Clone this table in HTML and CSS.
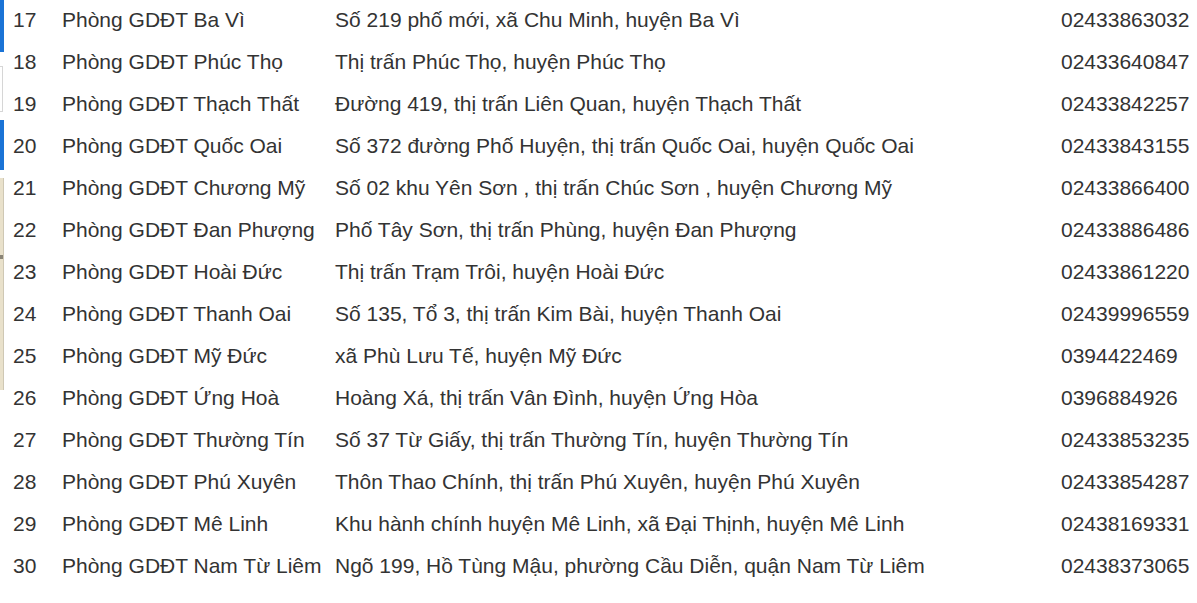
FILE: index.html
```html
<!DOCTYPE html>
<html lang="vi">
<head>
<meta charset="utf-8">
<title>Danh sách Phòng GDĐT</title>
<link rel="stylesheet" href="styles.css">
</head>
<body>
<div class="page">
  <div class="edge">
    <div class="edge-blue edge-b1"></div>
    <div class="edge-box"></div>
    <div class="edge-blue edge-b2"></div>
    <div class="edge-beige"><span class="edge-mark"></span></div>
  </div>
  <table class="list">
    <colgroup>
      <col class="c-no"><col class="c-name"><col class="c-addr"><col class="c-phone">
    </colgroup>
    <tbody>
      <tr><td>17</td><td>Phòng GDĐT Ba Vì</td><td>Số 219 phố mới, xã Chu Minh, huyện Ba Vì</td><td>02433863032</td></tr>
      <tr><td>18</td><td>Phòng GDĐT Phúc Thọ</td><td>Thị trấn Phúc Thọ, huyện Phúc Thọ</td><td>02433640847</td></tr>
      <tr><td>19</td><td>Phòng GDĐT Thạch Thất</td><td>Đường 419, thị trấn Liên Quan, huyện Thạch Thất</td><td>02433842257</td></tr>
      <tr><td>20</td><td>Phòng GDĐT Quốc Oai</td><td>Số 372 đường Phố Huyện, thị trấn Quốc Oai, huyện Quốc Oai</td><td>02433843155</td></tr>
      <tr><td>21</td><td>Phòng GDĐT Chương Mỹ</td><td>Số 02 khu Yên Sơn , thị trấn Chúc Sơn , huyện Chương Mỹ</td><td>02433866400</td></tr>
      <tr><td>22</td><td>Phòng GDĐT Đan Phượng</td><td>Phố Tây Sơn, thị trấn Phùng, huyện Đan Phượng</td><td>02433886486</td></tr>
      <tr><td>23</td><td>Phòng GDĐT Hoài Đức</td><td>Thị trấn Trạm Trôi, huyện Hoài Đức</td><td>02433861220</td></tr>
      <tr><td>24</td><td>Phòng GDĐT Thanh Oai</td><td>Số 135, Tổ 3, thị trấn Kim Bài, huyện Thanh Oai</td><td>02439996559</td></tr>
      <tr><td>25</td><td>Phòng GDĐT Mỹ Đức</td><td>xã Phù Lưu Tế, huyện Mỹ Đức</td><td>0394422469</td></tr>
      <tr><td>26</td><td>Phòng GDĐT Ứng Hoà</td><td>Hoàng Xá, thị trấn Vân Đình, huyện Ứng Hòa</td><td>0396884926</td></tr>
      <tr><td>27</td><td>Phòng GDĐT Thường Tín</td><td>Số 37 Từ Giấy, thị trấn Thường Tín, huyện Thường Tín</td><td>02433853235</td></tr>
      <tr><td>28</td><td>Phòng GDĐT Phú Xuyên</td><td>Thôn Thao Chính, thị trấn Phú Xuyên, huyện Phú Xuyên</td><td>02433854287</td></tr>
      <tr><td>29</td><td>Phòng GDĐT Mê Linh</td><td>Khu hành chính huyện Mê Linh, xã Đại Thịnh, huyện Mê Linh</td><td>02438169331</td></tr>
      <tr><td>30</td><td>Phòng GDĐT Nam Từ Liêm</td><td>Ngõ 199, Hồ Tùng Mậu, phường Cầu Diễn, quận Nam Từ Liêm</td><td>02438373065</td></tr>
    </tbody>
  </table>
</div>
</body>
</html>
```
FILE: styles.css
```css
html, body {
  margin: 0;
  padding: 0;
  background: #fff;
}
.page {
  display: flex;
  align-items: flex-start;
  width: 1197px;
  height: 603px;
  overflow: hidden;
}
.edge {
  display: flex;
  flex-direction: column;
  width: 4px;
  flex: 0 0 4px;
}
.edge-blue {
  background: #1a73d6;
}
.edge-b1 { height: 52px; }
.edge-box {
  margin-top: 14px;
  height: 44px;
  border: 1px solid #d6d6d6;
  border-left: 0;
  width: 2px;
  background: #fff;
}
.edge-b2 {
  margin-top: 8px;
  height: 50px;
}
.edge-beige {
  position: relative;
  margin-top: 8px;
  height: 212px;
  background: #e9e1cb;
  border-right: 1px solid #cfc8b4;
  width: 3px;
}
.edge-mark {
  position: absolute;
  left: 0;
  top: 77px;
  width: 3px;
  height: 4px;
  background: #8a8476;
}
.list {
  border-collapse: collapse;
  table-layout: fixed;
  width: 1193px;
  font-family: "Liberation Sans", Arial, sans-serif;
  font-size: 21px;
  color: #333;
}
.list td {
  height: 40px;
  padding: 0 0 2px 0;
  white-space: nowrap;
  vertical-align: middle;
}
.c-no { width: 58px; }
.c-name { width: 273px; }
.c-addr { width: 726px; }
.c-phone { width: 136px; }
.list td:first-child {
  padding-left: 9px;
}
```
